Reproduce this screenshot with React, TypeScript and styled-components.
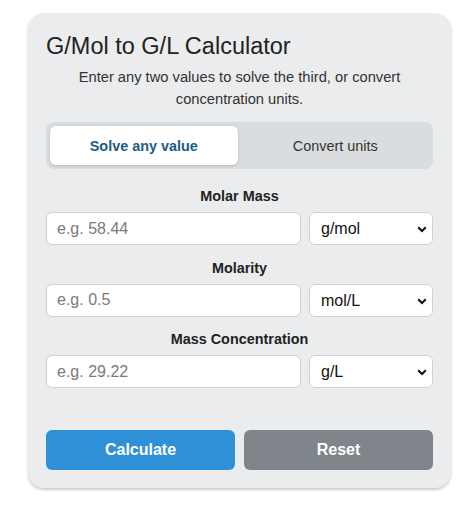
import React, { useState } from "react";
import styled, { createGlobalStyle } from "styled-components";

const GlobalStyle = createGlobalStyle`
  html, body { margin: 0; padding: 0; background: #ffffff; }
  body { font-family: "Liberation Sans", Arial, sans-serif; color: #222; }
  * { box-sizing: border-box; }
`;

const Page = styled.div`
  padding: 13px 19px 20px 28px;
`;

const Card = styled.div`
  width: 423px;
  background: #ebeced;
  border-radius: 16px;
  padding: 18px 18px 18px 18px;
  box-shadow: 0 2px 3px rgba(0, 0, 0, 0.2);
`;

const Title = styled.h1`
  margin: 1px 0 0;
  font-size: 23.5px;
  line-height: 28px;
  font-weight: 400;
  color: #222;
`;

const Subtitle = styled.p`
  margin: 6px 0 0;
  font-size: 14.7px;
  line-height: 22px;
  text-align: center;
  color: #333;
`;

const Tabs = styled.div`
  margin-top: 12px;
  display: grid;
  grid-template-columns: 1fr 1fr;
  gap: 4px;
  padding: 4px;
  background: #dadde0;
  border-radius: 8px;
`;

const Tab = styled.button<{ $active?: boolean }>`
  height: 39px;
  border: none;
  border-radius: 6px;
  font-family: inherit;
  font-size: 14.4px;
  font-weight: ${(p) => (p.$active ? 700 : 400)};
  color: ${(p) => (p.$active ? "#1d5c87" : "#333")};
  background: ${(p) => (p.$active ? "#ffffff" : "transparent")};
  box-shadow: ${(p) => (p.$active ? "0 1px 3px rgba(0,0,0,0.15)" : "none")};
  cursor: pointer;
`;

const Fields = styled.div`
  margin-top: 18px;
  display: flex;
  flex-direction: column;
  gap: 13.5px;
`;

const Field = styled.div`
  display: flex;
  flex-direction: column;
`;

const Label = styled.label`
  font-size: 14.4px;
  line-height: 18px;
  font-weight: 700;
  text-align: center;
  color: #222;
  margin-bottom: 7px;
`;

const Row = styled.div`
  display: grid;
  grid-template-columns: 1fr 124px;
  gap: 8px;
`;

const Input = styled.input`
  height: 33px;
  width: 100%;
  border: 1px solid #cfd1d3;
  border-radius: 6px;
  background: #fff;
  padding: 0 10px;
  font-family: inherit;
  font-size: 16px;
  color: #222;
  outline: none;
  &::placeholder { color: #7a7a7a; }
`;

const SelectWrap = styled.div`
  position: relative;
`;

const Select = styled.select`
  appearance: none;
  -webkit-appearance: none;
  height: 33px;
  width: 100%;
  border: 1px solid #cfd1d3;
  border-radius: 6px;
  background: #fff;
  padding: 0 24px 0 11px;
  font-family: inherit;
  font-size: 16px;
  color: #111;
  outline: none;
`;

const Chevron = styled.svg`
  position: absolute;
  right: 6px;
  top: 14px;
  pointer-events: none;
`;

const Buttons = styled.div`
  margin-top: 42px;
  display: grid;
  grid-template-columns: 1fr 1fr;
  gap: 9px;
`;

const Button = styled.button<{ $variant: "primary" | "secondary" }>`
  height: 40px;
  border: none;
  border-radius: 6px;
  font-family: inherit;
  font-size: 16px;
  font-weight: 700;
  color: #fff;
  background: ${(p) => (p.$variant === "primary" ? "#2e91d8" : "#7f858b")};
  cursor: pointer;
`;

const fields = [
  { label: "Molar Mass", placeholder: "e.g. 58.44", unit: "g/mol" },
  { label: "Molarity", placeholder: "e.g. 0.5", unit: "mol/L" },
  { label: "Mass Concentration", placeholder: "e.g. 29.22", unit: "g/L" },
];

export default function App() {
  const [tab, setTab] = useState(0);
  return (
    <>
      <GlobalStyle />
      <Page>
        <Card>
          <Title>G/Mol to G/L Calculator</Title>
          <Subtitle>
            Enter any two values to solve the third, or convert concentration units.
          </Subtitle>
          <Tabs>
            <Tab $active={tab === 0} onClick={() => setTab(0)}>Solve any value</Tab>
            <Tab $active={tab === 1} onClick={() => setTab(1)}>Convert units</Tab>
          </Tabs>
          <Fields>
            {fields.map((f) => (
              <Field key={f.label}>
                <Label>{f.label}</Label>
                <Row>
                  <Input placeholder={f.placeholder} />
                  <SelectWrap>
                    <Select defaultValue={f.unit}>
                      <option value={f.unit}>{f.unit}</option>
                    </Select>
                    <Chevron width="10" height="7" viewBox="0 0 10 7">
                      <polyline points="1.2,1.2 5,5 8.8,1.2" fill="none" stroke="#111" strokeWidth="2" />
                    </Chevron>
                  </SelectWrap>
                </Row>
              </Field>
            ))}
          </Fields>
          <Buttons>
            <Button $variant="primary">Calculate</Button>
            <Button $variant="secondary">Reset</Button>
          </Buttons>
        </Card>
      </Page>
    </>
  );
}
